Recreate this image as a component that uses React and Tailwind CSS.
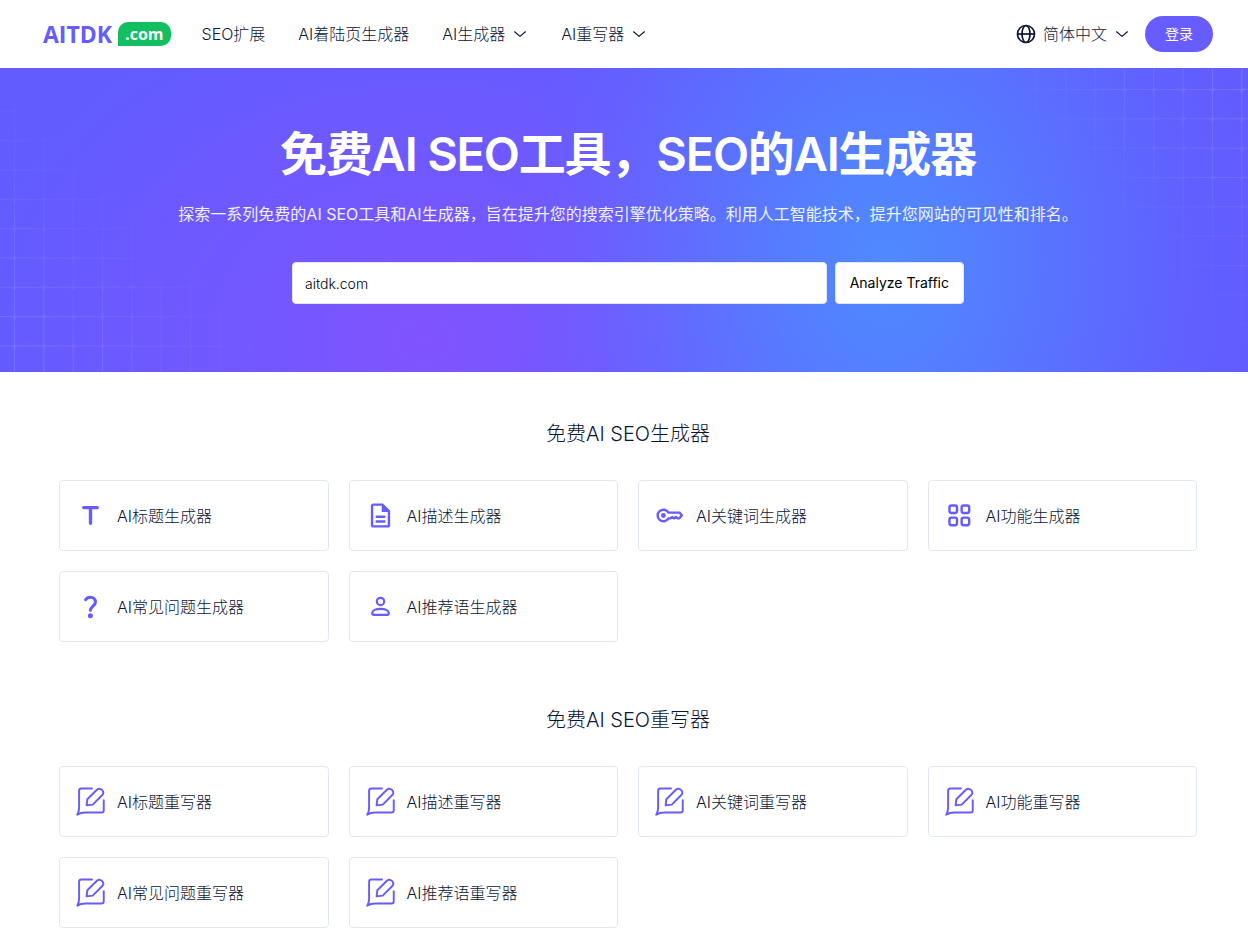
import { useState } from 'react'
import { MdOutlineDescription } from 'react-icons/md'

function TitleIcon() {
  return (
    <svg viewBox="0 0 30 30" className="size-[29px]" fill="none" stroke="currentColor" strokeWidth="3.5" strokeLinecap="round" aria-hidden="true">
      <path d="M8 6.8h14M15 6.8V23" />
    </svg>
  )
}

function FileIcon() {
  return <MdOutlineDescription className="size-[29px]" aria-hidden="true" />
}

function KeyIcon() {
  return (
    <svg viewBox="0 0 30 30" className="size-[29px]" fill="none" stroke="currentColor" strokeWidth="2.5" strokeLinejoin="round" aria-hidden="true">
      <path d="M13.9 12A6 6 0 1 0 13.9 18h2l1.9-1.5 1.9 1.5 1.9-1.5 1.9 1.5h1.5l2.8-3-2.4-3z" />
      <circle cx="8.7" cy="15" r="2.5" fill="currentColor" stroke="none" />
    </svg>
  )
}

function GridIcon() {
  return (
    <svg viewBox="0 0 30 30" className="size-[29px]" fill="none" stroke="currentColor" strokeWidth="2.5" aria-hidden="true">
      <rect x="4.6" y="4.6" width="7.8" height="7.8" rx="2" />
      <rect x="17.2" y="4.6" width="7.8" height="7.8" rx="2" />
      <rect x="4.6" y="17.2" width="7.8" height="7.8" rx="2" />
      <rect x="17.2" y="17.2" width="7.8" height="7.8" rx="2" />
    </svg>
  )
}

function QuestionIcon() {
  return (
    <svg viewBox="0 0 30 30" className="size-[29px]" fill="none" stroke="currentColor" strokeWidth="3.2" strokeLinecap="round" strokeLinejoin="round" aria-hidden="true">
      <path d="M10 7.9c1-1.6 2.7-2.5 4.7-2.5 3.2 0 5.400 2.100 5.400 4.900 0 4.200-5.200 4.800-5.200 8.600" />
      <circle cx="14.9" cy="24.6" r="2.6" fill="currentColor" stroke="none" />
    </svg>
  )
}

function PersonIcon() {
  return (
    <svg viewBox="0 0 30 30" className="size-[29px]" fill="none" stroke="currentColor" strokeWidth="2.3" strokeLinejoin="round" aria-hidden="true">
      <circle cx="15" cy="9.8" r="3.8" />
      <path d="M6.4 21.800c0-2.800 4-4.400 8.600-4.400s8.600 1.600 8.600 4.400c0 1.300-.4 1.800-1.600 1.800H8c-1.200 0-1.600-.5-1.600-1.800z" />
    </svg>
  )
}

function EditIcon() {
  return (
    <svg viewBox="0 0 30 30" className="size-[29px]" fill="none" stroke="currentColor" strokeWidth="2" strokeLinecap="round" strokeLinejoin="round" aria-hidden="true">
      <path d="M16.5 1.5H5.6Q3.2 1.5 3.2 3.9V21.5Q3.2 25.5 1.3 28.6Q5 26.4 9.5 26.4H26.4Q28.7 26.4 28.7 24.1V13.8" />
      <path d="M11 19l.7-6.3 9.900-9.900q2.600-2.300 5.300.2 2.600 2.700.3 5.300L17.300 18.200z" />
    </svg>
  )
}

function GlobeIcon() {
  return (
    <svg viewBox="0 0 20 20" className="size-5" fill="none" stroke="currentColor" strokeWidth="1.7" aria-hidden="true">
      <circle cx="10" cy="10" r="8.5" />
      <ellipse cx="10" cy="10" rx="4" ry="8.5" />
      <path d="M1.5 10h17" />
    </svg>
  )
}

function Chevron() {
  return (
    <svg viewBox="0 0 16 16" className="size-4" fill="none" stroke="currentColor" strokeWidth="1.2" strokeLinecap="round" strokeLinejoin="round" aria-hidden="true">
      <path d="M2.6 5.8L8 10.4l5.4-4.6" />
    </svg>
  )
}

function Logo() {
  return (
    <a href="#" className="flex items-center gap-[6px] font-['Open_Sans',sans-serif] font-bold">
      <span className="text-[23px] leading-6 text-[#665cff]">AITDK</span>
      <span className="flex h-6 items-center rounded-[10px] rounded-bl-none bg-[#12bf60] px-[7px] text-base leading-6 text-white">.com</span>
    </a>
  )
}

function GridCell() {
  return (
    <>
      <path d="M.5 0v29.33M0 .5h29.33" stroke="#a39fff" strokeWidth="1" />
      <path d="M0 0h4.5Q1.2 1.2 0 4.5zM29.33 0v3.5Q28.5 1 25.8 0zM0 29.33v-3.5Q1 28.5 3.5 29.33z" fill="#a39fff" />
    </>
  )
}

// faint square grid that fades out from the bottom left and top right corners
function HeroGrid() {
  return (
    <svg className="absolute inset-0 size-full" aria-hidden="true">
      <defs>
        <pattern id="cells-left" x="14" y="13.5" width="29.33" height="29.33" patternUnits="userSpaceOnUse">
          <GridCell />
        </pattern>
        <pattern id="cells-right" x="20" y="21" width="29.33" height="29.33" patternUnits="userSpaceOnUse">
          <GridCell />
        </pattern>
        <linearGradient id="fade-left" gradientUnits="userSpaceOnUse" x1="0" y1="304" x2="160" y2="142">
          <stop offset="0" stopColor="#fff" stopOpacity=".36" />
          <stop offset="1" stopColor="#fff" stopOpacity="0" />
        </linearGradient>
        <linearGradient id="fade-right" gradientUnits="userSpaceOnUse" x1="320" y1="0" x2="168" y2="146">
          <stop offset="0" stopColor="#fff" stopOpacity=".36" />
          <stop offset="1" stopColor="#fff" stopOpacity="0" />
        </linearGradient>
        <mask id="mask-left">
          <rect width="320" height="304" fill="url(#fade-left)" />
        </mask>
        <mask id="mask-right">
          <rect width="320" height="304" fill="url(#fade-right)" />
        </mask>
      </defs>
      <rect width="320" height="304" fill="url(#cells-left)" mask="url(#mask-left)" />
      <svg x="100%" width="320" height="304" overflow="visible">
        <g transform="translate(-320 0)">
          <rect width="320" height="304" fill="url(#cells-right)" mask="url(#mask-right)" />
        </g>
      </svg>
    </svg>
  )
}

const generators = [
  { label: 'AI标题生成器', Icon: TitleIcon },
  { label: 'AI描述生成器', Icon: FileIcon },
  { label: 'AI关键词生成器', Icon: KeyIcon },
  { label: 'AI功能生成器', Icon: GridIcon },
  { label: 'AI常见问题生成器', Icon: QuestionIcon },
  { label: 'AI推荐语生成器', Icon: PersonIcon },
]

const rewriters = [
  { label: 'AI标题重写器', Icon: EditIcon },
  { label: 'AI描述重写器', Icon: EditIcon },
  { label: 'AI关键词重写器', Icon: EditIcon },
  { label: 'AI功能重写器', Icon: EditIcon },
  { label: 'AI常见问题重写器', Icon: EditIcon },
  { label: 'AI推荐语重写器', Icon: EditIcon },
]

function ToolSection({ title, tools }) {
  return (
    <section>
      <h2 className="text-center text-xl leading-7">{title}</h2>
      <div className="mt-8 grid grid-cols-4 gap-5">
        {tools.map(({ label, Icon }) => (
          <a key={label} href="#" className="flex items-center gap-3 rounded border border-[#e2e8f0] px-4 py-5 leading-7">
            <span className="text-[#665cff]">
              <Icon />
            </span>
            {label}
          </a>
        ))}
      </div>
    </section>
  )
}

function App() {
  const [domain, setDomain] = useState('aitdk.com')

  return (
    <div className="bg-white font-[Inter,'Noto_Sans_CJK_SC',sans-serif] text-base font-light text-[#0b1536]">
      <header className="flex h-[68px] items-center justify-between pr-[35px] pl-[43px]">
        <div className="flex items-center gap-[31px]">
          <Logo />
          <nav className="flex items-center gap-[33px]">
            <a href="#">SEO扩展</a>
            <a href="#">AI着陆页生成器</a>
            <button className="flex items-center gap-[7px]">
              AI生成器
              <Chevron />
            </button>
            <button className="flex items-center gap-[7px]">
              AI重写器
              <Chevron />
            </button>
          </nav>
        </div>
        <div className="flex items-center gap-[15px]">
          <button className="flex items-center gap-[7px]">
            <GlobeIcon />
            简体中文
            <Chevron />
          </button>
          <button className="h-9 rounded-full bg-[#665cff] px-5 text-sm font-normal text-white">登录</button>
        </div>
      </header>

      <div className="relative bg-[radial-gradient(ellipse_370px_480px_at_71%_64%,#4f8aff_0%,#4f8affc0_24%,#4f8aff60_56%,#4f8aff1c_80%,#4f8aff00_100%),radial-gradient(ellipse_460px_360px_at_34%_90%,#8054ff_0%,#8054ff90_38%,#8054ff00_100%)] bg-[#625cff]">
        <HeroGrid />
        <div className="relative flex flex-col items-center pt-[57px] pr-4 pb-[68px] pl-6 text-white">
          <h1 className="text-center text-[47px] leading-[58px] font-semibold tracking-tight">免费AI SEO工具，SEO的AI生成器</h1>
          <p className="mt-[19px] text-center leading-6 font-normal text-white/90">
            探索一系列免费的AI SEO工具和AI生成器，旨在提升您的搜索引擎优化策略。利用人工智能技术，提升您网站的可见性和排名。
          </p>
          <form className="mt-9 flex w-full max-w-2xl gap-2" onSubmit={(e) => e.preventDefault()}>
            <input
              type="text"
              aria-label="Domain"
              value={domain}
              onChange={(e) => setDomain(e.target.value)}
              className="h-[42px] min-w-0 flex-1 rounded border border-[#e2e8f0] bg-white px-3 text-sm text-black outline-none"
            />
            <button className="h-[42px] rounded border border-[#e2e8f0] bg-white px-[14px] text-sm font-normal text-black">
              Analyze Traffic
            </button>
          </form>
        </div>
      </div>

      <main className="flex flex-col gap-16 pt-12 pr-[51px] pb-2 pl-[59px]">
        <ToolSection title="免费AI SEO生成器" tools={generators} />
        <ToolSection title="免费AI SEO重写器" tools={rewriters} />
      </main>
    </div>
  )
}

export default App
